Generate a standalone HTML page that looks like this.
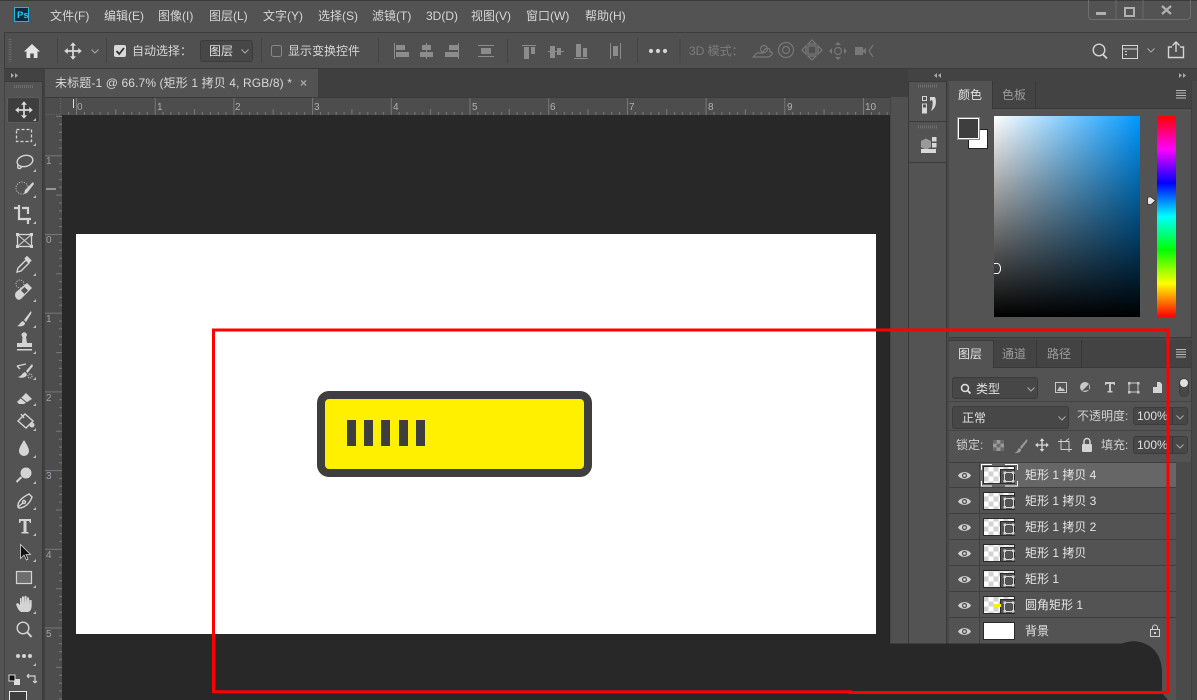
<!DOCTYPE html>
<html><head><meta charset="utf-8"><style>
html,body{margin:0;padding:0;width:1197px;height:700px;overflow:hidden;background:#535353}
body{position:relative;font:12px/16px "Liberation Sans","Noto Sans CJK SC",sans-serif;color:#d6d6d6}
.b{position:absolute;box-sizing:border-box}
.t{position:absolute;white-space:pre;line-height:16px}
svg{position:absolute;left:0;top:0}
.i{fill:#d4d4d4;stroke:none}
.s{fill:none;stroke:#d4d4d4;stroke-width:1.4}
.g{fill:#8c8c8c;stroke:none}
.gs{fill:none;stroke:#8c8c8c;stroke-width:1.2}
.gd{fill:none;stroke:#787878;stroke-width:1.2}
</style></head><body>
<!-- top chrome -->
<div class="b" style="left:0;top:0;width:1197px;height:32px;background:#535353;border-top:1px solid #3a3a3a"></div>
<div class="b" style="left:4px;top:32px;width:1193px;height:37px;background:#505050;border-top:1px solid #3c3c3c;border-left:1px solid #3c3c3c;border-bottom:1px solid #3a3a3a"></div>
<!-- dock strip -->
<div class="b" style="left:4px;top:69px;width:1193px;height:631px;background:#434343"></div>
<div class="b" style="left:5px;top:69px;width:38px;height:12px;background:#424242"></div>
<div class="b" style="left:5px;top:81px;width:38px;height:619px;background:#535353;border-top:1px solid #3a3a3a;border-right:1px solid #3a3a3a"></div>
<div class="b" style="left:0;top:33px;width:4px;height:667px;background:#535353"></div>
<div class="b" style="left:43px;top:69px;width:2px;height:631px;background:#404040"></div>
<!-- tab bar -->
<div class="b" style="left:45px;top:69px;width:863px;height:28px;background:#3f3f3f"></div>
<div class="b" style="left:45px;top:69px;width:273px;height:28px;background:#535353"></div>
<div class="t" style="left:55px;top:75px;color:#d8d8d8;letter-spacing:.12px">未标题-1 @ 66.7% (矩形 1 拷贝 4, RGB/8) *</div>
<div class="t" style="left:300px;top:75px;color:#a8a8a8;font-weight:bold">×</div>
<!-- rulers & canvas -->
<div class="b" style="left:45px;top:97px;width:845px;height:18px;background:#4d4d4d;border-top:1px solid #3a3a3a"></div>
<div class="b" style="left:45px;top:115px;width:17px;height:585px;background:#4d4d4d"></div>
<div class="b" style="left:62px;top:115px;width:828px;height:585px;background:#282828"></div>
<div class="b" style="left:76px;top:234px;width:800px;height:400px;background:#fff"></div>
<div class="b" style="left:890px;top:97px;width:18px;height:603px;background:#505050;border-left:1px solid #444"></div>
<!-- rect on canvas -->
<div class="b" style="left:317px;top:391px;width:275px;height:86px;background:#fff000;border:8.5px solid #3e3e3e;border-radius:12px"></div>
<div class="b" style="left:347px;top:420px;width:9px;height:26px;background:#3e3e3e"></div>
<div class="b" style="left:364px;top:420px;width:9px;height:26px;background:#3e3e3e"></div>
<div class="b" style="left:381px;top:420px;width:9px;height:26px;background:#3e3e3e"></div>
<div class="b" style="left:399px;top:420px;width:9px;height:26px;background:#3e3e3e"></div>
<div class="b" style="left:416px;top:420px;width:9px;height:26px;background:#3e3e3e"></div>
<!-- right dock -->
<div class="b" style="left:908px;top:69px;width:289px;height:12px;background:#434343"></div>
<div class="b" style="left:908px;top:81px;width:39px;height:619px;background:#535353;border-left:1px solid #3a3a3a;border-right:1px solid #3a3a3a;border-top:1px solid #3a3a3a"></div>
<div class="b" style="left:909px;top:121px;width:37px;height:1px;background:#3a3a3a"></div>
<div class="b" style="left:909px;top:162px;width:37px;height:1px;background:#3a3a3a"></div>
<div class="b" style="left:947px;top:81px;width:250px;height:619px;background:#484848"></div>
<!-- colour panel -->
<div class="b" style="left:949px;top:81px;width:243px;height:257px;background:#535353;border-right:1px solid #3f3f3f;border-bottom:1px solid #3a3a3a"></div>
<div class="b" style="left:992px;top:81px;width:199px;height:28px;background:#434343;border-bottom:1px solid #3a3a3a"></div>
<div class="b" style="left:992px;top:81px;width:44px;height:28px;border-left:1px solid #383838;border-right:1px solid #383838;border-bottom:1px solid #383838"></div>
<div class="t" style="left:958px;top:87px;color:#e2e2e2">颜色</div>
<div class="t" style="left:1002px;top:87px;color:#9c9c9c">色板</div>
<div class="b" style="left:994px;top:116px;width:146px;height:201px;background:linear-gradient(to top,#000,rgba(0,0,0,0)),linear-gradient(to right,#fff,#0098ff)"></div>
<div class="b" style="left:1157px;top:116px;width:19px;height:201px;background:linear-gradient(to bottom,#f00 0%,#f0f 16.6%,#00f 33.3%,#0ff 50%,#0f0 66.6%,#ff0 83.3%,#f00 100%)"></div>
<div class="b" style="left:968px;top:129px;width:20px;height:20px;background:#fff;border:1px solid #222"></div>
<div class="b" style="left:958px;top:118px;width:21px;height:21px;background:#3e3e3e;border:1.5px solid #fff;outline:1px solid #8a8a8a"></div>
<!-- layers panel -->
<div class="b" style="left:949px;top:340px;width:243px;height:360px;background:#535353;border-top:1px solid #3a3a3a;border-right:1px solid #3f3f3f"></div>
<div class="b" style="left:993px;top:340px;width:198px;height:28px;background:#434343;border-bottom:1px solid #3a3a3a"></div>
<div class="b" style="left:993px;top:340px;width:44px;height:28px;border-left:1px solid #383838;border-right:1px solid #383838;border-bottom:1px solid #383838"></div>
<div class="b" style="left:1037px;top:340px;width:45px;height:28px;border-right:1px solid #383838;border-bottom:1px solid #383838"></div>
<div class="t" style="left:958px;top:346px;color:#e2e2e2">图层</div>
<div class="t" style="left:1002px;top:346px;color:#9c9c9c">通道</div>
<div class="t" style="left:1047px;top:346px;color:#9c9c9c">路径</div>
<div class="b" style="left:952px;top:377px;width:86px;height:22px;background:#474747;border:1px solid #3c3c3c;border-radius:3px"></div>
<div class="t" style="left:976px;top:381px;color:#e0e0e0">类型</div>
<div class="b" style="left:952px;top:406px;width:117px;height:23px;background:#474747;border:1px solid #3c3c3c;border-radius:3px"></div>
<div class="t" style="left:962px;top:410px;color:#e0e0e0">正常</div>
<div class="t" style="left:1077px;top:408px;color:#cfcfcf">不透明度:</div>
<div class="b" style="left:1133px;top:407px;width:55px;height:18px;background:#474747;border:1px solid #3c3c3c;border-radius:3px"></div>
<div class="b" style="left:1172px;top:407px;width:1px;height:18px;background:#3a3a3a"></div>
<div class="t" style="left:1137px;top:408px;color:#e0e0e0">100%</div>
<div class="b" style="left:949px;top:430px;width:242px;height:1px;background:#444"></div>
<div class="b" style="left:949px;top:401px;width:242px;height:1px;background:#444"></div>
<div class="t" style="left:956px;top:437px;color:#cfcfcf">锁定:</div>
<div class="t" style="left:1101px;top:437px;color:#cfcfcf">填充:</div>
<div class="b" style="left:1133px;top:436px;width:55px;height:18px;background:#474747;border:1px solid #3c3c3c;border-radius:3px"></div>
<div class="b" style="left:1172px;top:436px;width:1px;height:18px;background:#3a3a3a"></div>
<div class="t" style="left:1137px;top:437px;color:#e0e0e0">100%</div>
<div class="b" style="left:1176px;top:462px;width:15px;height:238px;background:#4a4a4a"></div>
<div class="b" style="left:979px;top:462px;width:197px;height:25px;background:#666"></div>
<div class="b" style="left:949px;top:462px;width:227px;height:1px;background:#3f3f3f"></div>
<div class="b" style="left:949px;top:487px;width:227px;height:1px;background:#3f3f3f"></div>
<div class="b" style="left:949px;top:513px;width:227px;height:1px;background:#3f3f3f"></div>
<div class="b" style="left:949px;top:539px;width:227px;height:1px;background:#3f3f3f"></div>
<div class="b" style="left:949px;top:565px;width:227px;height:1px;background:#3f3f3f"></div>
<div class="b" style="left:949px;top:591px;width:227px;height:1px;background:#3f3f3f"></div>
<div class="b" style="left:949px;top:617px;width:227px;height:1px;background:#3f3f3f"></div>
<div class="b" style="left:979px;top:462px;width:1px;height:182px;background:#3f3f3f"></div>
<div class="t" style="left:1025px;top:467px;color:#e6e6e6">矩形 1 拷贝 4</div>
<div class="t" style="left:1025px;top:493px;color:#e6e6e6">矩形 1 拷贝 3</div>
<div class="t" style="left:1025px;top:519px;color:#e6e6e6">矩形 1 拷贝 2</div>
<div class="t" style="left:1025px;top:545px;color:#e6e6e6">矩形 1 拷贝</div>
<div class="t" style="left:1025px;top:571px;color:#e6e6e6">矩形 1</div>
<div class="t" style="left:1025px;top:597px;color:#e6e6e6">圆角矩形 1</div>
<div class="t" style="left:1025px;top:623px;color:#e6e6e6">背景</div>
<!-- text top -->
<div class="t" style="left:50px;top:8px">文件(F)</div>
<div class="t" style="left:104px;top:8px">编辑(E)</div>
<div class="t" style="left:158px;top:8px">图像(I)</div>
<div class="t" style="left:209px;top:8px">图层(L)</div>
<div class="t" style="left:263px;top:8px">文字(Y)</div>
<div class="t" style="left:318px;top:8px">选择(S)</div>
<div class="t" style="left:372px;top:8px">滤镜(T)</div>
<div class="t" style="left:426px;top:8px">3D(D)</div>
<div class="t" style="left:471px;top:8px">视图(V)</div>
<div class="t" style="left:526px;top:8px">窗口(W)</div>
<div class="t" style="left:585px;top:8px">帮助(H)</div>
<div class="t" style="left:132px;top:43px">自动选择：</div>
<div class="b" style="left:200px;top:40px;width:53px;height:22px;background:#474747;border:1px solid #3c3c3c;border-radius:3px"></div>
<div class="t" style="left:209px;top:43px;color:#e0e0e0">图层</div>
<div class="t" style="left:288px;top:43px">显示变换控件</div>
<div class="t" style="left:689px;top:43px;color:#7c7c7c">3D 模式：</div>
<!-- ruler numbers -->
<div class="t" style="left:77px;top:100px;font-size:10px;color:#9aa3ad">0</div>
<div class="t" style="left:157px;top:100px;font-size:10px;color:#b0b0b0">1</div>
<div class="t" style="left:235px;top:100px;font-size:10px;color:#b0b0b0">2</div>
<div class="t" style="left:314px;top:100px;font-size:10px;color:#b0b0b0">3</div>
<div class="t" style="left:393px;top:100px;font-size:10px;color:#b0b0b0">4</div>
<div class="t" style="left:472px;top:100px;font-size:10px;color:#b0b0b0">5</div>
<div class="t" style="left:550px;top:100px;font-size:10px;color:#b0b0b0">6</div>
<div class="t" style="left:629px;top:100px;font-size:10px;color:#b0b0b0">7</div>
<div class="t" style="left:708px;top:100px;font-size:10px;color:#b0b0b0">8</div>
<div class="t" style="left:787px;top:100px;font-size:10px;color:#b0b0b0">9</div>
<div class="t" style="left:865px;top:100px;font-size:10px;color:#b0b0b0">10</div>
<div class="t" style="left:46px;top:154px;font-size:10px;color:#9aa3ad">1</div>
<div class="t" style="left:46px;top:233px;font-size:10px;color:#9aa3ad">0</div>
<div class="t" style="left:46px;top:312px;font-size:10px;color:#9aa3ad">1</div>
<div class="t" style="left:46px;top:391px;font-size:10px;color:#9aa3ad">2</div>
<div class="t" style="left:46px;top:469px;font-size:10px;color:#9aa3ad">3</div>
<div class="t" style="left:46px;top:548px;font-size:10px;color:#9aa3ad">4</div>
<div class="t" style="left:46px;top:627px;font-size:10px;color:#9aa3ad">5</div>

<svg width="1197" height="700" viewBox="0 0 1197 700">
<defs>
<pattern id="hr" x="76" y="97" width="78.7" height="18" patternUnits="userSpaceOnUse">
<path d="M.5 0V18M8.4 15V18M16.2 15V18M24.1 15V18M32 15V18M39.8 12V18M47.7 15V18M55.6 15V18M63.5 15V18M71.3 15V18" stroke="#777" stroke-width="1" fill="none"/></pattern>
<pattern id="vr" x="45" y="234" width="17" height="78.7" patternUnits="userSpaceOnUse">
<path d="M0 .5H17M14 8.4H17M14 16.2H17M14 24.1H17M14 32H17M11 39.8H17M14 47.7H17M14 55.6H17M14 63.5H17M14 71.3H17" stroke="#777" stroke-width="1" fill="none"/></pattern>
<pattern id="ck" x="983.500" y="466.500" width="10" height="10" patternUnits="userSpaceOnUse">
<rect width="10" height="10" fill="#fff"/><rect width="5" height="5" fill="#d2d2d2"/><rect x="5" y="5" width="5" height="5" fill="#d2d2d2"/></pattern>
<g id="eye"><path d="M-6.5 0C-4 -4.5 4 -4.5 6.500 0C4 4.500 -4 4.500 -6.500 0Z" fill="#d0d0d0"/><circle r="2.600" fill="#535353"/><circle r="1.300" fill="#d0d0d0"/></g>
<g id="ci"><path d="M1.500 3.500H10.500V12.500H1.500Z" fill="none" stroke="#d4d4d4"/><rect x=".5" y="2.500" width="2.500" height="2.500" fill="#d4d4d4"/><rect x="9" y="2.500" width="2.500" height="2.500" fill="#d4d4d4"/><rect x=".5" y="11" width="2.500" height="2.500" fill="#d4d4d4"/><rect x="9" y="11" width="2.500" height="2.500" fill="#d4d4d4"/></g>
<path id="chev" d="M-3.500 -1.500L0 2L3.500 -1.500" fill="none" stroke="#a8a8a8" stroke-width="1.100"/>
<path id="tri" d="M3 0V3H0Z" fill="#bdbdbd"/>
</defs>

<!-- rulers -->
<rect x="62" y="98" width="828" height="17" fill="url(#hr)"/>
<rect x="45" y="115" width="17" height="585" fill="url(#vr)"/>
<path d="M73.500 99V108" stroke="#e0e0e0"/><path d="M46 189H56" stroke="#e0e0e0"/>
<path d="M46 114.500H60M60.500 98V114" stroke="#6b6b6b" stroke-dasharray="1 1.500"/>

<!-- Ps logo -->
<rect x="14.500" y="7.500" width="14" height="14" fill="#0c2c3f" stroke="#19b6ec"/>
<text x="17" y="18" font-size="9.500" font-family="Liberation Sans" fill="#31c5f4" font-weight="bold">Ps</text>

<!-- window buttons -->
<path d="M1088.500 0V15.500Q1088.500 19.500 1092 19.500H1186Q1190.500 19.500 1190.500 15.500V0" fill="none" stroke="#6e6e6e"/>
<path d="M1116 0V19M1143 0V19" stroke="#6a6a6a"/>
<rect x="1096" y="12" width="10" height="3" fill="#b0b0b0"/>
<rect x="1125" y="8" width="9" height="8" fill="none" stroke="#b0b0b0" stroke-width="2"/>
<path d="M1162 6L1171 14M1171 6L1162 14" stroke="#b0b0b0" stroke-width="2.300"/>

<!-- options bar -->
<path d="M10 39V62" stroke="#6c6c6c" stroke-width="3" stroke-dasharray="1 1.500"/>
<path d="M24 51.500L32 44L40 51.500H37.500V58H33.800V53.500H30.200V58H26.500V51.500Z" class="i" style="fill:#e4e4e4"/>
<g stroke="#434343"><path d="M57.500 38V63M106.500 38V63M261.500 38V63M378.500 38V63M507.500 38V63M637.500 38V63M680 38V63"/></g>
<g transform="translate(73,51)" id="mv"><path d="M0 -6V6M-6 0H6" stroke="#d8d8d8" stroke-width="1.700" fill="none"/><path d="M0 -8.800L-3 -5.200H3ZM0 8.800L-3 5.200H3ZM-8.800 0L-5.200 -3V3ZM8.800 0L5.200 -3V3Z" fill="#d8d8d8"/></g>
<use href="#chev" x="95" y="51"/>
<rect x="114" y="45" width="12" height="12" rx="2" fill="#d8d8d8"/>
<path d="M116.500 51L119.200 54L124 48" fill="none" stroke="#333" stroke-width="1.800"/>
<use href="#chev" x="245" y="51"/>
<rect x="271.500" y="45.500" width="10" height="11" rx="2" fill="none" stroke="#888"/>
<g fill="#8c8c8c"><path d="M394 43h1v16h-1zM396 45h9v5h-9zM396 52h13v5h-13z"/><path d="M426 43h1v16h-1zM422 45h9v5h-9zM420 52h13v5h-13z"/><path d="M458 43h1v16h-1zM449 45h9v5h-9zM445 52h13v5h-13z"/><path d="M478 45h16v1h-16zM478 56h16v1h-16zM481 48h10v6h-10z"/>
<path d="M522 45h14v1h-14zM524 47h5v12h-5zM531 47h4v7h-4z"/><path d="M548 51h16v1h-16zM550 46h5v12h-5zM557 48h4v7h-4z"/><path d="M574 58h14v1h-14zM576 44h5v13h-5zM583 48h4v9h-4z"/><path d="M610 43h1v16h-1zM620 43h1v16h-1zM613 46h5v10h-5z"/></g>
<g fill="#d4d4d4"><circle cx="651" cy="51" r="2.100"/><circle cx="658" cy="51" r="2.100"/><circle cx="665" cy="51" r="2.100"/></g>
<!-- 3D icons -->
<g class="gd"><path d="M753 57L757 53L763 53C763 48 771 46 770 52C775 52 771 57 767 57Z"/><circle cx="764" cy="49" r="3.500"/><circle cx="786" cy="50" r="7.500"/><circle cx="786" cy="50" r="3.500"/><path d="M808 44h8l-4-4zM808 56h8l-4 4zM806 46v8l-4-4zM818 46v8l4-4z"/><rect x="808" y="46" width="8" height="8"/><circle cx="838" cy="51" r="3.500"/></g>
<g fill="#787878"><path d="M838 42l3 3h-6zM838 60l3-3h-6zM829 51l3-3v6zM847 51l-3-3v6z"/><rect x="855" y="47" width="8" height="8"/><path d="M863 50l3-2v6l-3-2z"/></g>
<path d="M873 45l-4 6l4 6" class="gd"/>
<!-- right option icons -->
<circle cx="1099" cy="50" r="5.800" class="s"/><path d="M1103 54.500L1107 58.500" stroke="#d4d4d4" stroke-width="1.800"/>
<rect x="1122.500" y="45.500" width="15" height="13" class="s" style="stroke-width:1"/><path d="M1122 49H1138" stroke="#d4d4d4"/><path d="M1125 51h2v1h-2zM1125 54h2v1h-2z" fill="#d4d4d4"/>
<use href="#chev" x="1151" y="50"/>
<path d="M1172 47H1168.500V57.500H1183.500V47H1180M1176 52V42.500M1172.500 45.500L1176 42L1179.500 45.500" class="s"/>

<!-- left dock -->
<path d="M11 73l3 2.500l-3 2.500zM15 73l3 2.500l-3 2.500z" fill="#a8a8a8"/>
<path d="M14 86.500H34" stroke="#6e6e6e" stroke-width="3" stroke-dasharray="1 1"/>
<rect x="7.500" y="97.500" width="32" height="25" rx="2" fill="#3e3e3e" stroke="#5c5c5c"/>
<!-- tools -->
<use href="#mv" transform="translate(-49,59)"/>
<use href="#tri" x="33" y="118"/>
<rect x="16.500" y="129.500" width="15" height="12" fill="none" stroke="#d4d4d4" stroke-width="1.300" stroke-dasharray="3 2"/><use href="#tri" x="33" y="143"/>
<ellipse cx="25" cy="161" rx="8" ry="5.500" transform="rotate(-15 25 161)" class="s"/><path d="M18 165C17 169 20 170 22 166" class="s"/><use href="#tri" x="33" y="169"/>
<circle cx="22" cy="188" r="6" fill="none" stroke="#d4d4d4" stroke-dasharray="1 1.500"/><path d="M33 182L25 190L24 194L27 193L34 184Z" class="i"/><use href="#tri" x="33" y="195"/>
<path d="M14 208H19V219H30M19 205V208M22 208H28V214M28 219V224M28 219H31" fill="none" stroke="#d4d4d4" stroke-width="2.200"/><use href="#tri" x="33" y="221"/>
<rect x="17.500" y="234.500" width="14" height="12" fill="none" stroke="#d4d4d4" stroke-width="1.300"/><path d="M17.500 234.500L31.500 246.500M31.500 234.500L17.500 246.500" stroke="#d4d4d4"/><path d="M16 233h3v3h-3zM30 233h3v3h-3zM16 245h3v3h-3zM30 245h3v3h-3z" fill="#d4d4d4"/>
<path d="M17 272L18 268L26 260L29 263L21 271Z" class="s"/><path d="M27 256.500L31 260.500L29 262.500L25 258.500Z" class="i" style="stroke:#d4d4d4"/><use href="#tri" x="33" y="273"/>
<path d="M16 292L27 283L32 288L21 299Q18 301 16 298Q14 295 16 292Z" class="i"/><rect x="22" y="288" width="5" height="5" fill="#535353" transform="rotate(45 24.500 290.500)"/><circle cx="20" cy="284" r="4" fill="none" stroke="#d4d4d4" stroke-dasharray="1 1.500"/><use href="#tri" x="33" y="299"/>
<path d="M31 311L24 320L26 322L31.500 313ZM23 321C20 322 20 325 17 326C21 327 25 326 25 323Z" class="i"/><use href="#tri" x="33" y="325"/>
<path d="M22.500 337A2.700 2.700 0 1 1 26 337L27 343H32V347H17V343H22ZM17 349H32V350.500H17Z" class="i"/><use href="#tri" x="33" y="351"/>
<path d="M32 364L26 371L27.500 373L33 366ZM25 372C22 373 22 376 18 377C22 379 27 377 27 374Z" class="i"/><path d="M17 366L26 364M17 366L20 369" class="s"/><circle cx="30" cy="376" r="2" fill="none" stroke="#d4d4d4" stroke-dasharray="1 1"/><use href="#tri" x="33" y="377"/>
<path d="M17 402L26 393L32 399L24 404H19Z" class="i"/><path d="M21 398L27 403" stroke="#535353"/><use href="#tri" x="33" y="403"/>
<path d="M18 421L25 414L33 421L26 428Z" class="s"/><path d="M21 414L24 418" class="s"/><circle cx="32" cy="425" r="2.500" class="i"/><use href="#tri" x="33" y="428"/>
<path d="M24 440C21 445 19 448 19 451A5 5 0 0 0 29 451C29 448 27 445 24 440Z" class="i"/><use href="#tri" x="33" y="455"/>
<circle cx="26" cy="473" r="5.500" class="i"/><path d="M21.500 477L16.500 482" stroke="#d4d4d4" stroke-width="2"/><use href="#tri" x="33" y="481"/>
<path d="M18 507C17 501 23 497 29 494L32 497C30 503 25 508 19 508Z" class="s"/><circle cx="24" cy="502" r="1.500" class="s"/><path d="M18 507L23 503" class="s"/><use href="#tri" x="33" y="507"/>
<path d="M19 519H31V523H30L29 521H26.500V532H28.500V533.500H21.500V532H23.500V521H21L20 523H19Z" class="i"/><use href="#tri" x="33" y="533"/>
<path d="M20.500 544.500V558.500L24 555L26.500 560L28 559L26 554.500H30.500Z" fill="#111" stroke="#d4d4d4" stroke-width=".8"/><use href="#tri" x="33" y="559"/>
<rect x="16.500" y="571.500" width="15" height="12" fill="#6e6e6e" stroke="#d4d4d4" stroke-width="1.200"/><use href="#tri" x="33" y="585"/>
<path d="M21 612C18 610 17 607 16 604L18 603L20 605V598H21.500L22 604V596.500H24L24.500 604V596H26.500L27 604V597.500H29L29.500 605V600H31.500C32 606 32 611 28 612Z" class="i"/><use href="#tri" x="33" y="611"/>
<circle cx="23" cy="628" r="5.800" class="s"/><path d="M27.500 632.500L31.500 637" stroke="#d4d4d4" stroke-width="2"/>
<g fill="#d4d4d4"><circle cx="18" cy="656" r="2"/><circle cx="24" cy="656" r="2"/><circle cx="30" cy="656" r="2"/></g><use href="#tri" x="33" y="663"/>
<rect x="14" y="679" width="6" height="6" fill="#ddd"/><rect x="9" y="675" width="6" height="6" fill="#111" stroke="#ddd"/>
<path d="M27 676H35V682M27 676L29 674M27 676L29 678M35 683L33 681M35 683L37 681" fill="none" stroke="#d4d4d4" stroke-width="1.200"/>
<rect x="9.500" y="691.500" width="17" height="12" fill="#3e3e3e" stroke="#e8e8e8"/>

<!-- right dock -->
<path d="M937 73l-3 2.500l3 2.500zM941 73l-3 2.500l3 2.500zM1179 73l3 2.500l-3 2.500zM1183 73l3 2.500l-3 2.500z" fill="#a8a8a8"/>
<path d="M918 86H937M918 127H937" stroke="#6e6e6e" stroke-width="3" stroke-dasharray="1 1"/>
<g fill="none" stroke="#d4d4d4"><rect x="922.500" y="96.500" width="4" height="4"/><rect x="922.500" y="104" width="4" height="4"/></g><rect x="922" y="108.500" width="5" height="5" fill="#d8d8d8"/>
<path d="M930 97H935C937 102 936 108 931 111C933 106 933 102 932 100L930 101Z" fill="#d8d8d8"/>
<path d="M921 141L926 138.500L931 141V147L926 150L921 147Z" fill="#9a9a9a"/><rect x="932" y="137" width="4.500" height="4.500" fill="#d8d8d8"/><rect x="932" y="143" width="4.500" height="4.500" fill="#d8d8d8"/><rect x="921" y="149" width="15" height="4" fill="#d8d8d8"/>
<path d="M1176 90.500H1186M1176 93H1186M1176 95.500H1186M1176 98H1186M1176 349.500H1186M1176 352H1186M1176 354.500H1186M1176 357H1186" stroke="#b8b8b8"/>
<!-- colour markers -->
<path d="M1148 197H1151L1155.500 200.500L1151 204.500H1148Q1147 200.500 1148 197Z" fill="#e8e8e8" stroke="#333" stroke-width=".8"/>
<path d="M994 263.500H998Q1000.500 265 1000.500 268.500Q1000.500 272 998 273.500H994" fill="none" stroke="#fff" stroke-width="1"/>

<!-- layers filter -->
<circle cx="965" cy="388" r="3.500" fill="none" stroke="#e0e0e0" stroke-width="1.500"/><path d="M967.500 390.500L970.500 393.500" stroke="#e0e0e0" stroke-width="1.800"/>
<use href="#chev" x="1031" y="389"/><use href="#chev" x="1062" y="418"/><use href="#chev" x="1180" y="417"/><use href="#chev" x="1180" y="446"/>
<rect x="1055.500" y="382.500" width="11" height="10" fill="none" stroke="#c8c8c8"/><path d="M1057 391L1060 386L1062 389L1063 388L1065 391Z" fill="#c8c8c8"/>
<circle cx="1085" cy="387" r="5" fill="#c8c8c8"/><path d="M1082 391L1089 384V390Z" fill="#535353"/>
<path d="M1105 382H1115V385H1114L1113.500 384H1111V391H1112.500V392.500H1107.500V391H1109V384H1106.500L1106 385H1105Z" fill="#c8c8c8"/>
<rect x="1129" y="383" width="9" height="9" fill="none" stroke="#c8c8c8"/><path d="M1128 382h2.500v2.500h-2.500zM1137 382h2.500v2.500h-2.500zM1128 391h2.500v2.500h-2.500zM1137 391h2.500v2.500h-2.500z" fill="#c8c8c8"/>
<path d="M1153 387H1157V382H1160L1162 384V393H1153Z" fill="#d4d4d4"/>
<rect x="1179.500" y="378.500" width="9" height="18" rx="4.500" fill="#474747" stroke="#3c3c3c"/><circle cx="1184" cy="383" r="4" fill="#e0e0e0"/>
<!-- lock icons -->
<rect x="993" y="440" width="11" height="11" fill="#9a9a9a"/><path d="M993 440h3.700v3.700h-3.700zM1000.300 440h3.700v3.700h-3.700zM996.700 443.700h3.700v3.700h-3.700zM993 447.400h3.700v3.700h-3.700zM1000.300 447.400h3.700v3.700h-3.700z" fill="#6a6a6a"/>
<path d="M1027 439L1020 447L1021.500 449L1027.500 441ZM1019 448C1017 450 1018 452 1014 453C1018 453.500 1022 452 1021 449Z" fill="#9a9a9a"/>
<g transform="translate(1042,445) scale(.78)"><path d="M0 -6V6M-6 0H6" stroke="#d8d8d8" stroke-width="1.700" fill="none"/><path d="M0 -8.800L-3 -5.200H3ZM0 8.800L-3 5.200H3ZM-8.800 0L-5.200 -3V3ZM8.800 0L5.200 -3V3Z" fill="#d8d8d8"/></g>
<path d="M1058 441.500H1069V452M1061 439V449.500H1072M1065 442L1069 438.500" fill="none" stroke="#cfcfcf"/>
<rect x="1082" y="444" width="10" height="8" rx="1" fill="#d4d4d4"/><path d="M1084 444V441.500A3 3 0 0 1 1090 441.500V444" fill="none" stroke="#d4d4d4" stroke-width="1.500"/>
<!-- eyes -->
<use href="#eye" x="964.500" y="475.500"/><use href="#eye" x="964.500" y="501.500"/><use href="#eye" x="964.500" y="527.500"/><use href="#eye" x="964.500" y="553.500"/><use href="#eye" x="964.500" y="579.500"/><use href="#eye" x="964.500" y="605.500"/><use href="#eye" x="964.500" y="631.500"/>
<!-- thumbs -->
<g>
<rect x="983.500" y="466.500" width="31" height="17" fill="url(#ck)" stroke="#2a2a2a"/><path d="M1000.500 483.500V469.500H1014.500V483.500Z" fill="#535353" stroke="#2a2a2a"/><use href="#ci" x="1003" y="469"/>
<path d="M981.500 470V464.500H992M1005 464.500H1017.500V470M981.500 481V486H992M1005 486H1017.500V481" fill="none" stroke="#fff"/>
<rect x="983.500" y="492.500" width="31" height="17" fill="url(#ck)" stroke="#2a2a2a"/><path d="M1000.500 509.500V495.500H1014.500V509.500Z" fill="#535353" stroke="#2a2a2a"/><use href="#ci" x="1003" y="495"/>
<rect x="983.500" y="518.500" width="31" height="17" fill="url(#ck)" stroke="#2a2a2a"/><path d="M1000.500 535.500V521.500H1014.500V535.500Z" fill="#535353" stroke="#2a2a2a"/><use href="#ci" x="1003" y="521"/>
<rect x="983.500" y="544.500" width="31" height="17" fill="url(#ck)" stroke="#2a2a2a"/><path d="M1000.500 561.500V547.500H1014.500V561.500Z" fill="#535353" stroke="#2a2a2a"/><use href="#ci" x="1003" y="547"/>
<rect x="983.500" y="570.500" width="31" height="17" fill="url(#ck)" stroke="#2a2a2a"/><path d="M1000.500 587.500V573.500H1014.500V587.500Z" fill="#535353" stroke="#2a2a2a"/><use href="#ci" x="1003" y="573"/>
<rect x="983.500" y="596.500" width="31" height="17" fill="url(#ck)" stroke="#2a2a2a"/><path d="M1000.500 613.500V599.500H1014.500V613.500Z" fill="#535353" stroke="#2a2a2a"/><use href="#ci" x="1003" y="599"/><rect x="993" y="604" width="8" height="3" fill="#fff000"/>
<rect x="983.500" y="622.500" width="31" height="17" fill="#fff" stroke="#2a2a2a"/>
</g>
<rect x="1150.500" y="629.500" width="9" height="7" fill="none" stroke="#cfcfcf"/><path d="M1152.500 629.500V627.500A2.500 2.500 0 0 1 1157.500 627.500V629.500" fill="none" stroke="#cfcfcf"/><rect x="1154" y="632" width="2" height="2" fill="#cfcfcf"/>
<!-- blob -->
<path d="M890 643.500H1122Q1130 640.500 1138 641.500Q1160 646 1162 670V693L1168 700H890Z" fill="#282828"/>
<!-- red rectangle -->
<path d="M213.500 330H1168V692.500H850V691.800H213.500Z" fill="none" stroke="#f00" stroke-width="3"/>
</svg>
</body></html>
